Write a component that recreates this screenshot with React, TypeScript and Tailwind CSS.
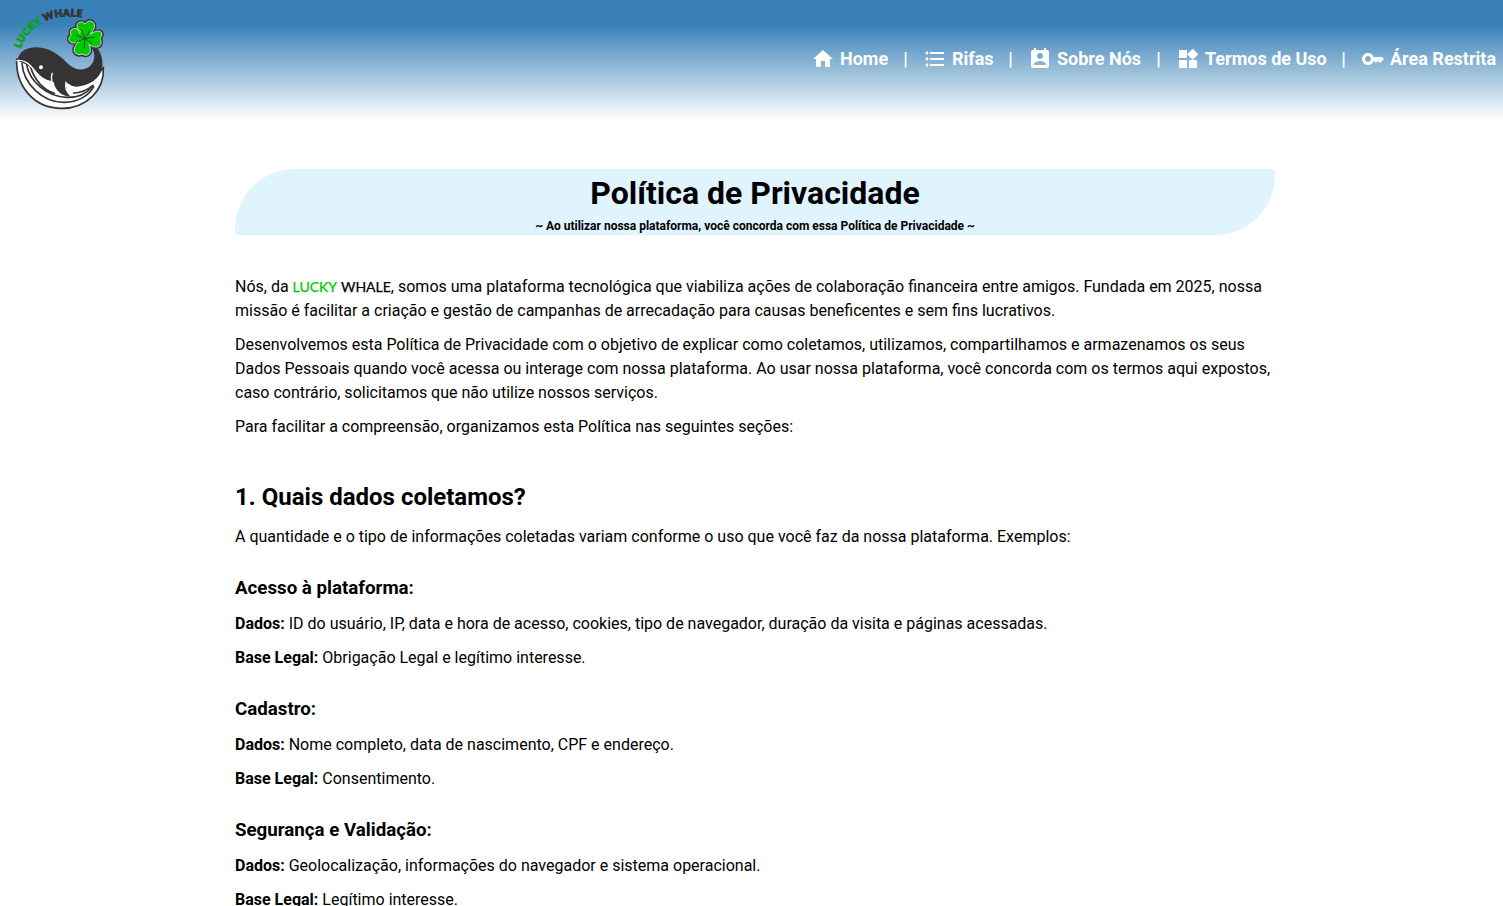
import { Fragment } from "react";
import { MdHome, MdFormatListBulleted, MdPermContactCalendar, MdWidgets, MdKey } from "react-icons/md";

const links = [
  { label: "Home", Icon: MdHome, width: "w-[77px]" },
  { label: "Rifas", Icon: MdFormatListBulleted, width: "w-[70px]" },
  { label: "Sobre Nós", Icon: MdPermContactCalendar, width: "w-[113px]" },
  { label: "Termos de Uso", Icon: MdWidgets, width: "w-[150px]" },
  { label: "Área Restrita", Icon: MdKey, width: "w-[136px]" },
];

const sections = [
  {
    title: "Acesso à plataforma:",
    data: "ID do usuário, IP, data e hora de acesso, cookies, tipo de navegador, duração da visita e páginas acessadas.",
    basis: "Obrigação Legal e legítimo interesse.",
  },
  {
    title: "Cadastro:",
    data: "Nome completo, data de nascimento, CPF e endereço.",
    basis: "Consentimento.",
  },
  {
    title: "Segurança e Validação:",
    data: "Geolocalização, informações do navegador e sistema operacional.",
    basis: "Legítimo interesse.",
  },
];

const clover =
  "M254 115 C228 93 226 72 238 67 Q247 62 255 72 Q265 58 278 66 C291 75 280 98 258 113 C276 96 296 88 304 97 Q309 106 300 116 Q308 130 297 139 C285 145 264 137 257 119 C275 139 274 158 264 164 Q255 169 247 162 Q233 169 225 158 C217 146 230 125 251 118 C229 133 211 131 207 121 Q204 111 213 106 Q207 90 220 86 C234 82 247 98 254 115Z";

function Logo() {
  return (
    <svg viewBox="0 0 360 360" className="size-[120px] shrink-0" aria-label="Lucky Whale">
      <defs>
        <path id="arc" d="M62 146 C78 96 130 53 186 50 Q220 46 268 56" />
      </defs>
      <text fontFamily="Lato, sans-serif" fontWeight="900" fontSize="30" stroke="#353334" strokeWidth="2.5">
        <textPath href="#arc" textLength="226">
          <tspan fill="#08a516" stroke="#08a516">LUCKY </tspan>
          <tspan fill="#353334">WHALE</tspan>
        </textPath>
      </text>
      {/* belly */}
      <path
        d="M50 178 C47 260 103 325 185 325 C260 325 314 269 310 204 C290 227 246 251 196 246 C147 246 106 195 50 178Z"
        fill="#fff"
        stroke="#353334"
        strokeWidth="5"
      />
      <g fill="none" stroke="#353334" strokeWidth="5" strokeLinecap="round">
        <path d="M66 190 C70 251 128 308 193 307 C232 307 268 287 281 260" />
        <path d="M80 193 C88 244 140 289 199 292 C231 293 259 282 276 260" />
        <path d="M91 199 C103 241 131 270 163 280" />
        <path d="M221 279 C243 279 262 270 279 256" />
      </g>
      {/* back, tail and fin */}
      <path
        d="M53 183 C54 157 78 142 108 142 C151 142 182 169 207 194 C235 218 272 210 281 181 C286 164 281 151 273 140 L283 137 C302 151 310 174 307 205 C300 236 266 259 230 260 C216 260 205 252 199 246 C197 265 202 279 213 291 C185 287 166 274 161 246 C139 242 121 233 106 216 C89 197 74 184 53 183Z"
        fill="#353334"
      />
      <path d="M49 182 C75 177 90 194 106 214 C121 233 137 243 155 245" fill="none" stroke="#fff" strokeWidth="4" />
      <path d="M157 218 C150 236 156 258 170 273" fill="none" stroke="#fff" strokeWidth="4" />
      <path d="M213 288 C199 277 195 260 198 245" fill="none" stroke="#fff" strokeWidth="4" />
      <circle cx="123" cy="202" r="6" fill="#fff" />
      {/* clover */}
      <path d={clover} fill="#353334" stroke="#353334" strokeWidth="11" strokeLinejoin="round" />
      <path d={clover} fill="#00c900" stroke="#c9dccd" strokeWidth="3" />
      <circle cx="255" cy="115" r="20" fill="#00c900" />
      <path
        d="M255 115 L243 90 M255 115 L270 91 M255 115 L284 112 M255 115 L275 131 M255 115 L252 146 M255 115 L228 127 M255 115 L227 106"
        stroke="#145b20"
        strokeWidth="3"
      />
      <circle cx="255" cy="115" r="4" fill="#145b20" />
    </svg>
  );
}

export default function App() {
  return (
    <div className="h-[906px] overflow-hidden bg-white font-[Roboto,sans-serif] text-base leading-6 text-black">
      <header className="flex h-[120px] items-center justify-between bg-[linear-gradient(180deg,#3880b7_0%,#3880b7_20%,#fff_100%)] pr-[6px]">
        <Logo />
        <nav className="flex items-center pb-[2px] text-lg font-bold text-white">
          {links.map(({ label, Icon, width }, index) => (
            <Fragment key={label}>
              {index > 0 && <span className="w-[35px] text-center">|</span>}
              <a href="#" className={`flex shrink-0 items-center gap-[5px] whitespace-nowrap ${width}`}>
                <Icon className="size-6 shrink-0" />
                {label}
              </a>
            </Fragment>
          ))}
        </nav>
      </header>
      <main className="ml-[235px] w-[1040px] pt-[49px]">
        <div className="h-[66px] rounded-tl-[60px] rounded-tr-[4px] rounded-br-[60px] rounded-bl-[4px] bg-[#e0f4fe] text-center font-bold">
          <h1 className="pt-[5px] text-[32px] leading-[38px]">Política de Privacidade</h1>
          <p className="pt-[5px] text-xs leading-[18px]">
            ~ Ao utilizar nossa plataforma, você concorda com essa Política de Privacidade ~
          </p>
        </div>
        <div className="flex flex-col gap-[10px] pt-10">
          <p>
            Nós, da{" "}
            <span className="font-[Lato,sans-serif] text-sm leading-4 whitespace-nowrap [-webkit-text-stroke:0.25px]">
              <span className="mr-[0.4px] text-[#00c900]">LUCKY</span> <span>WHALE</span>
            </span>
            , somos uma plataforma tecnológica que viabiliza ações de colaboração financeira entre amigos. Fundada em
            2025, nossa missão é facilitar a criação e gestão de campanhas de arrecadação para causas beneficentes e sem
            fins lucrativos.
          </p>
          <p>
            Desenvolvemos esta Política de Privacidade com o objetivo de explicar como coletamos, utilizamos,
            compartilhamos e armazenamos os seus Dados Pessoais quando você acessa ou interage com nossa plataforma. Ao
            usar nossa plataforma, você concorda com os termos aqui expostos, caso contrário, solicitamos que não
            utilize nossos serviços.
          </p>
          <p>Para facilitar a compreensão, organizamos esta Política nas seguintes seções:</p>
        </div>
        <h2 className="pt-10 text-2xl leading-9 font-bold">1. Quais dados coletamos?</h2>
        <p className="pt-[10px]">
          A quantidade e o tipo de informações coletadas variam conforme o uso que você faz da nossa plataforma.
          Exemplos:
        </p>
        {sections.map(({ title, data, basis }) => (
          <section key={title} className="pt-[25px]">
            <h3 className="text-[18.72px] leading-7 font-bold">{title}</h3>
            <p className="pt-[10px]">
              <strong>Dados:</strong> {data}
            </p>
            <p className="pt-[10px]">
              <strong>Base Legal:</strong> {basis}
            </p>
          </section>
        ))}
      </main>
    </div>
  );
}
